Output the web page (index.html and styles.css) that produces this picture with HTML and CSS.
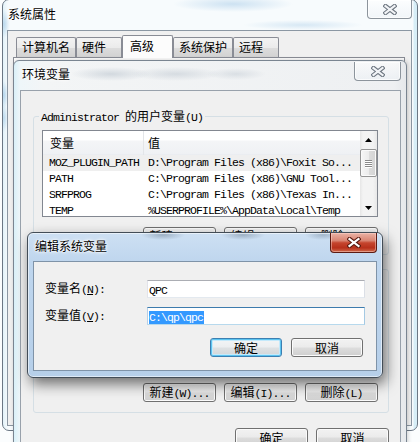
FILE: index.html
```html
<!DOCTYPE html>
<html lang="zh-CN">
<head>
<meta charset="utf-8">
<title>环境变量</title>
<link rel="stylesheet" href="styles.css">
</head>
<body>
<div class="desktop">

  <section class="win sys">
    <header class="titlebar">
      <span class="title">系统属性</span>
      <span class="close close-off"><svg width="14" height="11" viewBox="0 0 14 11"><path d="M2.5 2 L11.5 9 M11.5 2 L2.5 9" class="x-out"/><path d="M2.5 2 L11.5 9 M11.5 2 L2.5 9" class="x-in"/></svg></span>
    </header>
    <div class="client sys-client">
      <nav class="tabs">
        <span class="tab">计算机名</span>
        <span class="tab">硬件</span>
        <span class="tab tab-on">高级</span>
        <span class="tab">系统保护</span>
        <span class="tab">远程</span>
      </nav>
      <div class="tabpanel"></div>
    </div>
  </section>

  <section class="win env">
    <header class="titlebar">
      <span class="title">环境变量</span>
      <span class="close close-off"><svg width="14" height="11" viewBox="0 0 14 11"><path d="M2.5 2 L11.5 9 M11.5 2 L2.5 9" class="x-out"/><path d="M2.5 2 L11.5 9 M11.5 2 L2.5 9" class="x-in"/></svg></span>
    </header>
    <div class="client env-client">
      <div class="group g1">
        <span class="legend"><span class="m">Administrator </span>的用户变量<span class="m">(U)</span></span>
        <div class="listview">
          <div class="lv-main">
            <div class="lv-head"><span class="c1">变量</span><span class="c2">值</span></div>
            <div class="lv-row lv-sel"><span class="c1 m">MOZ_PLUGIN_PATH</span><span class="c2 m">D:\Program Files (x86)\Foxit So...</span></div>
            <div class="lv-row"><span class="c1 m">PATH</span><span class="c2 m">C:\Program Files (x86)\GNU Tool...</span></div>
            <div class="lv-row"><span class="c1 m">SRFPROG</span><span class="c2 m">C:\Program Files (x86)\Texas In...</span></div>
            <div class="lv-row"><span class="c1 m">TEMP</span><span class="c2 m">%USERPROFILE%\AppData\Local\Temp</span></div>
          </div>
          <div class="vscroll">
            <span class="sb-btn"><svg width="7" height="4" viewBox="0 0 7 4"><path d="M0 4 L3.5 0 L7 4 Z" fill="#000"/></svg></span>
            <span class="sb-thumb"><i></i><i></i><i></i><i></i></span>
            <span class="sb-track"></span>
            <span class="sb-btn"><svg width="7" height="4" viewBox="0 0 7 4"><path d="M0 0 L7 0 L3.5 4 Z" fill="#000"/></svg></span>
          </div>
        </div>
        <div class="btnrow">
          <button class="btn">新建<span class="m">(N)...</span></button>
          <button class="btn">编辑<span class="m">(E)...</span></button>
          <button class="btn">删除<span class="m">(D)</span></button>
        </div>
      </div>

      <div class="group g2">
        <span class="legend">系统变量<span class="m">(S)</span></span>
        <div class="listview lv2"></div>
        <div class="btnrow btnrow-low">
          <button class="btn">新建<span class="m">(W)...</span></button>
          <button class="btn">编辑<span class="m">(I)...</span></button>
          <button class="btn">删除<span class="m">(L)</span></button>
        </div>
      </div>

      <div class="btnrow btnrow-main">
        <button class="btn">确定</button>
        <button class="btn">取消</button>
      </div>
    </div>
  </section>

  <section class="win dlg">
    <header class="titlebar">
      <span class="title">编辑系统变量</span>
      <span class="close close-red"><svg width="14" height="11" viewBox="0 0 14 11"><path d="M2.5 2 L11.5 9 M11.5 2 L2.5 9" class="x-out"/><path d="M2.5 2 L11.5 9 M11.5 2 L2.5 9" class="x-in"/></svg></span>
    </header>
    <div class="client dlg-client">
      <div class="form">
        <label>变量名<span class="m">(<u>N</u>):</span></label>
        <div class="input"><span class="m">QPC</span></div>
        <label>变量值<span class="m">(<u>V</u>):</span></label>
        <div class="input input-focus"><span class="m seltext">C:\qp\qpc</span></div>
      </div>
      <div class="btnrow btnrow-dlg">
        <button class="btn btn-default">确定</button>
        <button class="btn">取消</button>
      </div>
    </div>
  </section>

</div>
</body>
</html>
```
FILE: styles.css
```css
* { box-sizing: border-box; }
html, body { margin: 0; padding: 0; }
body {
  width: 420px;
  height: 442px;
  overflow: hidden;
  font-family: "Noto Sans CJK SC", "Liberation Sans", sans-serif;
  font-size: 12px;
  color: #000;
}
.desktop {
  position: relative;
  width: 420px;
  height: 442px;
  overflow: hidden;
  background: #fbfdfe;
}
.m {
  font-family: "Liberation Mono", monospace;
  font-size: 11.5px;
  letter-spacing: -0.9px;
}

/* windows */
.win {
  position: absolute;
  display: flex;
  flex-direction: column;
  border: 1px solid #6b7784;
}
.titlebar {
  flex: none;
  display: flex;
  justify-content: space-between;
  align-items: flex-start;
}
.title {
  line-height: 14px;
  padding: 6px 0 0 2px;
  text-shadow: 0 0 5px #fff, 0 0 3px #fff, 0 0 2px #fff;
  white-space: nowrap;
}
.client {
  flex: 1;
  min-height: 0;
  border: 1px solid #8d99a5;
  background: #f0f0f0;
}

/* close buttons */
.close {
  display: flex;
  align-items: center;
  justify-content: center;
  width: 47px;
  height: 19px;
  border: 1px solid #8c949c;
  border-top: none;
  border-radius: 0 0 4px 4px;
}
.close svg { display: block; }
.x-out { stroke: #6d7680; stroke-width: 4.2; stroke-linecap: square; fill: none; }
.x-in { stroke: #f2f4f7; stroke-width: 2.2; stroke-linecap: square; fill: none; }
.close-off {
  background: linear-gradient(rgba(255,255,255,0.6), rgba(235,240,245,0.5));
  box-shadow: inset 0 0 0 1px rgba(255,255,255,0.7);
}
.close-red {
  height: 20px;
  border-color: #5c1a12;
  background: linear-gradient(#eab3a6 0%, #d98573 40%, #c5452e 52%, #b7301b 78%, #d06a4c 100%);
  box-shadow: inset 0 0 0 1px rgba(255,220,210,0.45);
}
.close-red .x-out { stroke: #5a1a10; }
.close-red .x-in { stroke: #fff; }

/* outer window */
.sys {
  left: 2px;
  top: -1px;
  width: 416px;
  height: 432px;
  padding: 0 5px 4px 4px;
  border-radius: 7px;
  background:
    radial-gradient(ellipse 60px 8px at 230px 4px, rgba(170,205,232,0.55), transparent),
    radial-gradient(ellipse 60px 5px at 300px 25px, rgba(175,208,233,0.45), transparent),
    radial-gradient(ellipse 6px 14px at 1px 24px, rgba(160,200,230,0.6), transparent),
    radial-gradient(ellipse 4px 14px at 1px 95px, rgba(150,195,228,0.6), transparent),
    radial-gradient(ellipse 4px 14px at 1px 118px, rgba(150,195,228,0.5), transparent),
    linear-gradient(90deg, #e2f2f9 0, #f7fbfd 5px, #f7fbfd 410px, #d7eef7 411px);
}
.sys .titlebar { height: 30px; }
.sys .title { padding: 7px 0 0 1px; }
.sys .close { width: 45px; }
.sys-client {
  display: flex;
  flex-direction: column;
  padding: 4px 0 0 8px;
  border-color: #8b97a3;
}
.tabs {
  display: flex;
  align-items: flex-end;
  height: 22px;
  flex: none;
}
.tab {
  min-width: 46px;
  height: 20px;
  padding: 0 5px;
  line-height: 18px;
  border: 1px solid #898c95;
  border-bottom: none;
  border-radius: 2px 2px 0 0;
  background: linear-gradient(#f3f3f3 0%, #ebebeb 50%, #dddddd 51%, #d2d2d2 100%);
  white-space: nowrap;
}
.tab-on {
  min-width: 51px;
  height: 23px;
  margin-bottom: -1px;
  padding: 0 7px;
  line-height: 20px;
  background: #fcfcfc;
  position: relative;
  z-index: 1;
}
.tabpanel {
  flex: 1;
  width: 392px;
  margin-left: -3px;
  border: 1px solid #898c95;
  background: #fcfcfc;
}

/* environment window */
.env {
  left: 13px;
  top: 60px;
  width: 394px;
  height: 400px;
  padding: 0 5px 0 6px;
  border-color: #7a8591;
  border-radius: 6px 6px 0 0;
  background:
    radial-gradient(ellipse 40px 7px at 110px 73px, rgba(150,165,180,0.35), transparent),
    radial-gradient(ellipse 45px 7px at 175px 73px, rgba(150,165,180,0.3), transparent),
    radial-gradient(ellipse 30px 6px at 235px 73px, rgba(150,165,180,0.25), transparent),
    linear-gradient(90deg, #d9f0f8 0, #eef6f9 6px, #f3f5f6 30px, #eef0f2 380px, #e4e7ea 394px);
  background-position: -13px -60px, -13px -60px, -13px -60px, 0 0;
  background-repeat: no-repeat;
  background-size: 420px 442px, 420px 442px, 420px 442px, 100% 100%;
  box-shadow: 1px 0 4px rgba(0,0,0,0.18);
}
.env .titlebar { height: 29px; }
.env .close { margin-top: 1px; }
.env-client {
  display: flex;
  flex-direction: column;
  padding: 18px 11px 0 12px;
  border-color: #98a1ab;
}

/* group boxes */
.group {
  flex: none;
  display: flex;
  flex-direction: column;
  margin-top: 7px;
  border: 1px solid #d5dfe5;
  border-radius: 3px;
  padding: 0 10px 8px 8px;
}
.legend {
  align-self: flex-start;
  height: 14px;
  line-height: 14px;
  margin: -8px 0 0 -3px;
  padding: 0 2px;
  background: #f0f0f0;
  white-space: nowrap;
}
.listview {
  flex: none;
  display: flex;
  height: 87px;
  margin-top: 7px;
  border: 1px solid #828790;
  background: #fff;
  overflow: hidden;
}
.g2 {
  margin-top: 14px;
  padding-bottom: 10px;
}
.lv2 { height: 89px; }

/* list view */
.lv-main { flex: 1; min-width: 0; overflow: hidden; }
.lv-head {
  display: flex;
  height: 24px;
  line-height: 24px;
  background: linear-gradient(#ffffff 0, #ffffff 9px, #f4f5f7 10px, #eff1f4 23px, #e6e9ee 24px);
}
.lv-head .c1 { padding-left: 7px; border-right: 1px solid #e3e5e8; }
.lv-head .c2 { padding-left: 4px; }
.c1 { flex: none; width: 101px; padding-left: 6px; white-space: nowrap; overflow: hidden; }
.c2 { flex: 1; padding-left: 4px; white-space: nowrap; overflow: hidden; }
.lv-row {
  display: flex;
  height: 16px;
  line-height: 16px;
}
.lv-sel { background: #efefef; }

/* scrollbar */
.vscroll {
  flex: none;
  width: 17px;
  display: flex;
  flex-direction: column;
  background: linear-gradient(90deg, #e6e6e6 0, #f3f3f3 3px, #f3f3f3 13px, #e8e8e8 17px);
}
.sb-btn {
  flex: none;
  height: 17px;
  display: flex;
  align-items: center;
  justify-content: center;
}
.sb-thumb {
  flex: none;
  height: 28px;
  margin: 1px 0 0 0;
  border: 1px solid #959595;
  border-radius: 2px;
  background: linear-gradient(90deg, #f6f6f6 0, #ececec 50%, #dcdcdc 51%, #d4d4d4 100%);
  box-shadow: inset 0 0 0 1px #fafafa;
  display: flex;
  flex-direction: column;
  align-items: center;
  justify-content: center;
  gap: 1px;
}
.sb-thumb i {
  display: block;
  width: 7px;
  height: 1px;
  background: #8a8a8a;
  box-shadow: 0 1px 0 #fff;
}
.sb-track { flex: 1; }

/* buttons */
.btnrow {
  flex: none;
  display: flex;
  justify-content: flex-end;
  gap: 8px;
  margin-top: 10px;
}
.btnrow-low { margin-top: 11px; }
.btnrow-main { margin-top: 15px; }
.btn {
  width: 73px;
  height: 19px;
  padding: 0;
  margin: 0;
  border: 1px solid #707070;
  border-radius: 3px;
  font: 12px/15px "Noto Sans CJK SC", "Liberation Sans", sans-serif;
  color: #000;
  white-space: nowrap;
  background: linear-gradient(#f2f2f2 0%, #ebebeb 48%, #dddddd 52%, #cfcfcf 100%);
  box-shadow: inset 0 0 0 1px #fbfbfb;
}
.btn-default {
  border-color: #3c7fb1;
  box-shadow: inset 0 0 0 1px #5cc4f0, inset 0 0 0 2px #c4e9fb;
  background: linear-gradient(#f3f5f6 0%, #eceef0 48%, #dee1e3 52%, #d3d6d8 100%);
}

/* edit dialog */
.dlg {
  left: 27px;
  top: 232px;
  width: 356px;
  height: 146px;
  padding: 0 5px 6px 5px;
  border-color: #434d57;
  border-radius: 6px;
  background:
    radial-gradient(ellipse 22px 5px at 135px 2px, rgba(70,90,110,0.35), transparent),
    radial-gradient(ellipse 22px 5px at 215px 2px, rgba(70,90,110,0.35), transparent),
    radial-gradient(ellipse 18px 5px at 295px 2px, rgba(70,90,110,0.3), transparent),
    linear-gradient(#cde0f3 0, #bfd6ee 28px, #b6cfe9 100%);
  box-shadow: 3px 6px 14px rgba(0,0,0,0.55), inset 0 0 0 1px rgba(255,255,255,0.55);
}
.dlg .titlebar { height: 28px; }
.dlg-client {
  padding: 18px 11px 0 11px;
  border-color: #7f93a8;
}
.form {
  display: grid;
  grid-template-columns: 102px 218px;
  grid-auto-rows: 18px;
  row-gap: 9px;
  align-items: center;
}
.form label { line-height: 14px; white-space: nowrap; }
.input {
  height: 18px;
  padding: 1px 1px;
  line-height: 14px;
  border: 1px solid;
  border-color: #abadb3 #dbdfe6 #e3e9ef #e2e3ea;
  background: #fff;
  white-space: nowrap;
}
.input-focus { border-color: #3d7bad #a4c9e3 #b7d9ed #b5cfe7; }
.seltext { background: #3399ff; color: #fff; padding-right: 1px; }
.btnrow-dlg {
  width: 320px;
  margin-top: 13px;
  padding-right: 2px;
  gap: 9px;
}
.btnrow-dlg .btn { width: 72px; }
```
